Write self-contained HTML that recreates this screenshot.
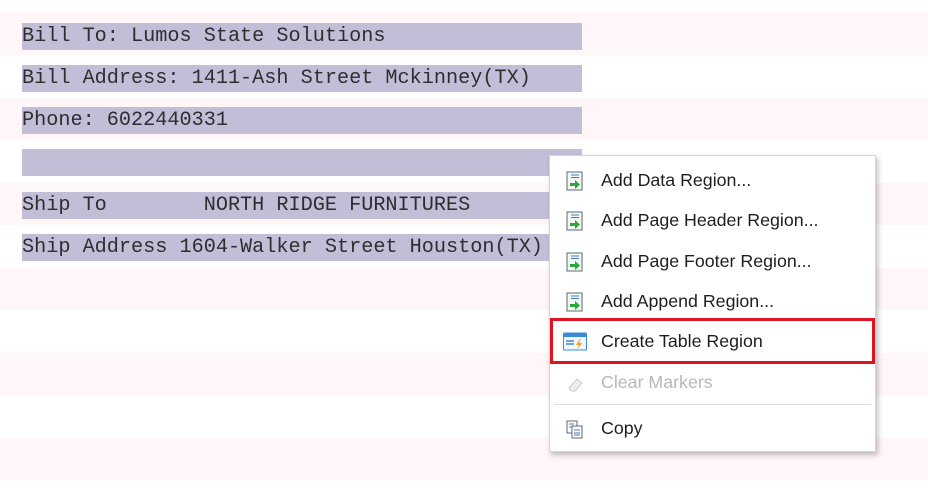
<!DOCTYPE html>
<html><head><style>
html,body{margin:0;padding:0;width:928px;height:492px;overflow:hidden;background:#fff;position:relative}
.st{position:absolute;left:0;width:928px;height:42px;background:#fff7f7}
.bar{position:absolute;left:22px;width:560px;height:27px;background:#c2bed8;font-family:"Liberation Mono",monospace;font-size:20.2px;color:#2e2e2e;line-height:27px;white-space:pre;overflow:hidden;letter-spacing:0px}
.menu{position:absolute;left:549px;top:155px;width:325px;height:295px;background:#fff;border:1px solid #d6d6d6;box-shadow:2px 3px 5px rgba(0,0,0,.25)}
.it{position:absolute;left:0;width:325px;height:40px;font-family:"Liberation Sans",sans-serif;font-size:17.8px;color:#1e1e1e;line-height:40px}
.it span{position:absolute;left:51px}
.ic{position:absolute;left:16px;top:11px;width:18px;height:20px}
</style></head><body>
<div class="st" style="top:13px"></div><div class="st" style="top:98px"></div><div class="st" style="top:183px"></div><div class="st" style="top:268px"></div><div class="st" style="top:353px"></div><div class="st" style="top:438px"></div>
<div class="bar" style="top:23px">Bill To: Lumos State Solutions</div>
<div class="bar" style="top:65px">Bill Address: 1411-Ash Street Mckinney(TX)</div>
<div class="bar" style="top:107px">Phone: 6022440331</div>
<div class="bar" style="top:149px"></div>
<div class="bar" style="top:192px">Ship To        NORTH RIDGE FURNITURES</div>
<div class="bar" style="top:234px">Ship Address 1604-Walker Street Houston(TX)</div>
<div class="menu">
<div class="it" style="top:4px"><svg class="ic" viewBox="0 0 18 20"><rect x="1" y="1" width="15" height="18" fill="#f4f8f4" stroke="#5a6a6a"/><path d="M5 4h8M5 6.5h8" stroke="#4a7ac0"/><path d="M4 12h5v-3l5 4.5-5 4.5v-3H4z" fill="#2aa83a"/></svg><span>Add Data Region...</span></div>
<div class="it" style="top:44px"><svg class="ic" viewBox="0 0 18 20"><rect x="1" y="1" width="15" height="18" fill="#f4f8f4" stroke="#5a6a6a"/><path d="M5 4h8M5 6.5h8" stroke="#4a7ac0"/><path d="M4 12h5v-3l5 4.5-5 4.5v-3H4z" fill="#2aa83a"/></svg><span>Add Page Header Region...</span></div>
<div class="it" style="top:85px"><svg class="ic" viewBox="0 0 18 20"><rect x="1" y="1" width="15" height="18" fill="#f4f8f4" stroke="#5a6a6a"/><path d="M5 4h8M5 6.5h8" stroke="#4a7ac0"/><path d="M4 12h5v-3l5 4.5-5 4.5v-3H4z" fill="#2aa83a"/></svg><span>Add Page Footer Region...</span></div>
<div class="it" style="top:125px"><svg class="ic" viewBox="0 0 18 20"><rect x="1" y="1" width="15" height="18" fill="#f4f8f4" stroke="#5a6a6a"/><path d="M5 4h8M5 6.5h8" stroke="#4a7ac0"/><path d="M4 12h5v-3l5 4.5-5 4.5v-3H4z" fill="#2aa83a"/></svg><span>Add Append Region...</span></div>
<div class="it" style="top:165px"><svg class="ic" style="width:24px;left:13px" viewBox="0 0 24 20"><rect x="0.5" y="1" width="23" height="17" rx="1" fill="#f0f6fc" stroke="#3a8ad8"/><rect x="0.5" y="1" width="23" height="4" fill="#3a8ad8"/><path d="M3 9h8M3 12h8" stroke="#3a8ad8" stroke-width="1.5"/><path d="M17 7l-4 6h3l-2 5 5-7h-3l2-4z" fill="#f0a020"/></svg><span>Create Table Region</span></div>
<div class="it" style="top:206px;color:#b8b8b8"><svg class="ic" viewBox="0 0 18 20"><path d="M3 15l8-9 5 4-7 8H5z" fill="#eee" stroke="#ccc"/></svg><span>Clear Markers</span></div>
<div style="position:absolute;left:4px;top:248px;width:317px;height:1px;background:#ddd"></div>
<div class="it" style="top:252px"><svg class="ic" viewBox="0 0 18 20"><rect x="1" y="2" width="10" height="12" fill="#fff" stroke="#667"/><rect x="6" y="7" width="10" height="12" fill="#fff" stroke="#667"/><path d="M3 5h5M3 8h3M8 11h6M8 14h6M8 16h6" stroke="#4a7ac0"/></svg><span>Copy</span></div>
</div>
<div style="position:absolute;left:550px;top:318px;width:319px;height:40px;border:3px solid #e0141e"></div>
</body></html>
